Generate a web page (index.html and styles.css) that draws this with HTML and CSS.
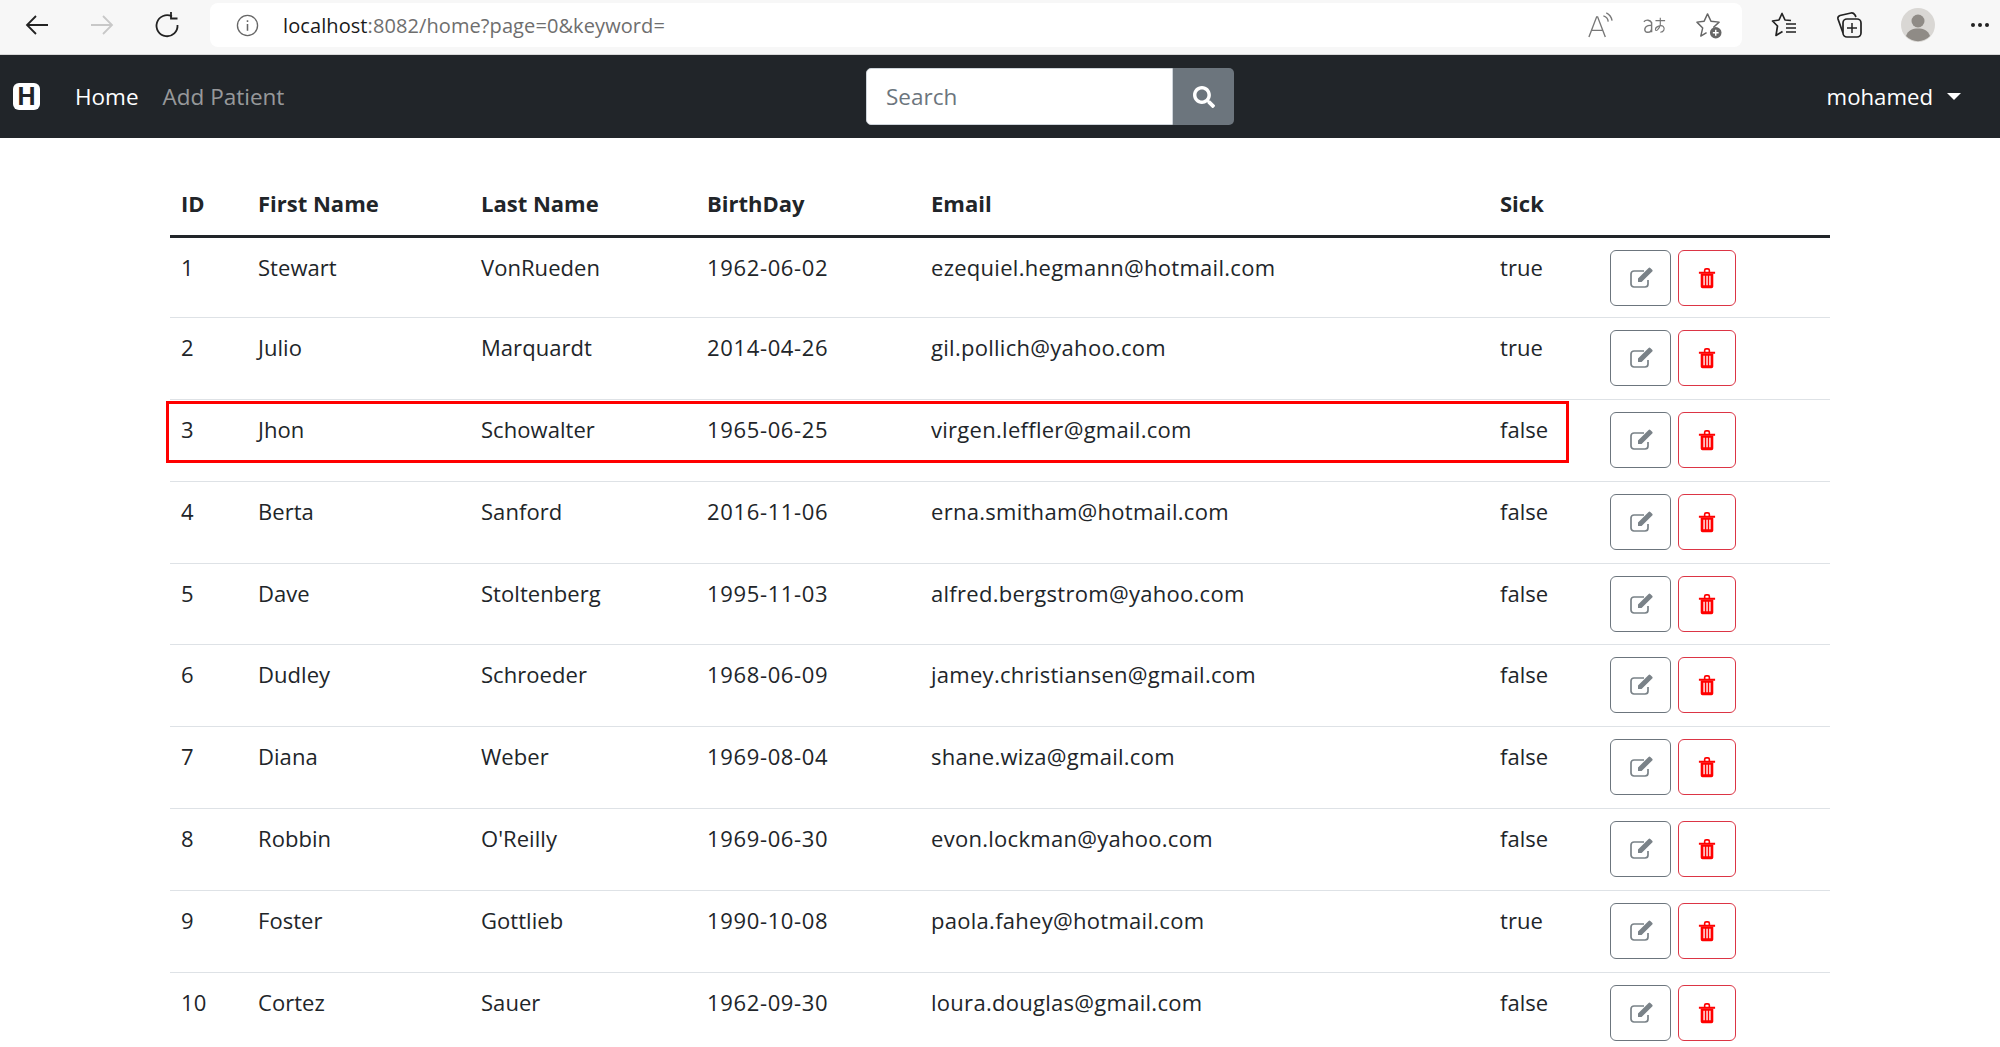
FILE: index.html
```html
<!DOCTYPE html>
<html lang="en">
<head>
<meta charset="utf-8">
<title>Patients</title>
<link rel="stylesheet" href="styles.css">
</head>
<body>
<svg class="defs" width="0" height="0" aria-hidden="true">
  <symbol id="i-edit" viewBox="0 0 24 24">
    <path d="M19 14v4a3 3 0 0 1-3 3H5a3 3 0 0 1-3-3V8a3 3 0 0 1 3-3h10" fill="none" stroke="currentColor" stroke-width="1.700"/>
    <path d="M9 12.500 18.600 2.900l3.600 3.600L12.600 16H9zM19.600 1.900a1.200 1.200 0 0 1 1.700 0l1.900 1.900a1.200 1.200 0 0 1 0 1.700l-1 1-3.600-3.600z" fill="currentColor"/>
  </symbol>
  <symbol id="i-trash" viewBox="0 0 20 24">
    <path d="M1 5h18v2.200H1zM6.500 5V3.500A2.500 2.500 0 0 1 9 1h2a2.500 2.500 0 0 1 2.500 2.500V5h-1.800V3.500A.8.8 0 0 0 11 2.800H9a.8.8 0 0 0-.7.7V5z" fill="currentColor"/>
    <path fill-rule="evenodd" d="M3 7h14v14.500a2 2 0 0 1-2 2H5a2 2 0 0 1-2-2zM6 9.500v10.500h1.500V9.500zM9.300 9.500v10.500h1.500V9.500zM12.500 9.500v10.500H14V9.500z" fill="currentColor"/>
  </symbol>
</svg>

<header class="browser">
  <div class="tools">
    <svg class="tool" viewBox="0 0 28 28"><path d="M25 14H4M13 5l-9 9 9 9" fill="none" stroke="#222" stroke-width="1.800"/></svg>
    <svg class="tool" viewBox="0 0 28 28"><path d="M3 14h21M15 5l9 9-9 9" fill="none" stroke="#c8c8c8" stroke-width="1.800"/></svg>
    <svg class="tool" viewBox="0 0 28 28"><path d="M19 5.500a10.500 10.500 0 1 0 5.500 8.500" fill="none" stroke="#222" stroke-width="1.800"/><path d="M18 1v6.500h6.500" fill="none" stroke="#222" stroke-width="1.800"/></svg>
  </div>
  <div class="address">
    <svg class="info" viewBox="0 0 24 24"><circle cx="12" cy="12" r="10.500" fill="none" stroke="#666" stroke-width="1.400"/><path d="M12 10.500v7M12 6.500v1.800" stroke="#666" stroke-width="1.600"/></svg>
    <span class="url"><span class="url-host">localhost</span>:8082/home?page=0&amp;keyword=</span>
    <span class="address-icons">
      <svg class="addr-icon" viewBox="0 0 28 28"><path d="M2 26 10 5h1l8 21M5 19h11" fill="none" stroke="#777" stroke-width="1.400"/><path d="M17 4a7 7 0 0 1 5 6M20 1a11 11 0 0 1 6 8" fill="none" stroke="#777" stroke-width="1.400"/></svg>
      <svg class="addr-icon" viewBox="0 0 28 28"><path d="M3 10a5 5 0 0 1 8 1v10M11 14c-8-1-9 7-4 7 3 0 4-2 4-4" fill="none" stroke="#777" stroke-width="1.500"/><path d="M15 9h10M20 6v7c-1 5-5 8-5 5s6-5 8-3 1 6-3 6" fill="none" stroke="#777" stroke-width="1.200"/></svg>
      <svg class="addr-icon" viewBox="0 0 28 28"><path d="M19 16 25 10.500 16.500 9.500 13 2 9.500 9.500 2 10.500 8 16.500 6 25 12 21.500" fill="none" stroke="#666" stroke-width="1.500" stroke-linejoin="round"/><circle cx="21.500" cy="21.500" r="6" fill="#666"/><path d="M21.500 18.500v6M18.500 21.500h6" stroke="#fff" stroke-width="1.500"/></svg>
    </span>
  </div>
  <div class="tools-right">
    <svg class="tool" viewBox="0 0 28 28"><path d="M20 9.500 14 9 11 2.500 8 9 1.500 10 6.500 15 5 24.500 11.500 20.500" fill="none" stroke="#222" stroke-width="1.700" stroke-linejoin="round"/><path d="M15 13h10M15 17h10M15 21h10" stroke="#222" stroke-width="1.500"/></svg>
    <svg class="tool" viewBox="0 0 28 28"><path d="M8 22 3 8c-.5-2 .5-3 2-3.500L16 2c2-.5 3 .5 4 2l1 2" fill="none" stroke="#222" stroke-width="1.700"/><rect x="8" y="8" width="18" height="18" rx="4" fill="#f7f7f7" stroke="#222" stroke-width="1.700"/><path d="M17 12v10M12 17h10" stroke="#222" stroke-width="1.500"/></svg>
    <svg class="avatar" viewBox="0 0 34 34"><circle cx="17" cy="17" r="17" fill="#d9d7d4"/><circle cx="17" cy="13" r="6.500" fill="#8f8b86"/><path d="M5 28c2-6 7-7.500 12-7.500S27 22 29 28a16.500 16.500 0 0 1-24 0z" fill="#8f8b86"/></svg>
    <span class="more"><i></i><i></i><i></i></span>
  </div>
</header>

<nav class="navbar">
  <div class="nav-left">
    <span class="brand">H</span>
    <a class="nav-link active" href="#">Home</a>
    <a class="nav-link" href="#">Add Patient</a>
  </div>
  <form class="search">
    <input class="search-input" type="text" placeholder="Search">
    <button class="search-btn" type="button" aria-label="Search">
      <svg viewBox="0 0 512 512" width="22" height="22"><path fill="currentColor" d="M505 442.700 405.300 343c-4.500-4.500-10.600-7-17-7H372c27.600-35.300 44-79.700 44-128C416 93.100 322.900 0 208 0S0 93.100 0 208s93.100 208 208 208c48.300 0 92.700-16.400 128-44v16.300c0 6.400 2.500 12.500 7 17l99.700 99.700c9.400 9.400 24.600 9.400 33.900 0l28.300-28.300c9.400-9.400 9.400-24.600.1-34zM208 336c-70.700 0-128-57.200-128-128 0-70.700 57.200-128 128-128 70.700 0 128 57.200 128 128 0 70.700-57.200 128-128 128z"/></svg>
    </button>
  </form>
  <div class="user">mohamed<span class="caret"></span></div>
</nav>

<main class="content">
  <div class="highlight"></div>
  <table class="patients">
    <colgroup>
      <col class="c-id"><col class="c-first"><col class="c-last"><col class="c-birth"><col class="c-email"><col class="c-sick"><col class="c-actions">
    </colgroup>
    <thead>
      <tr><th>ID</th><th>First Name</th><th>Last Name</th><th>BirthDay</th><th>Email</th><th>Sick</th><th></th></tr>
    </thead>
    <tbody>
      <tr><td>1</td><td>Stewart</td><td>VonRueden</td><td class="date">1962-06-02</td><td class="email">ezequiel.hegmann@hotmail.com</td><td>true</td><td class="actions"><div class="btns"><button class="btn btn-edit" type="button"><svg><use href="#i-edit"/></svg></button><button class="btn btn-del" type="button"><svg><use href="#i-trash"/></svg></button></div></td></tr>
      <tr><td>2</td><td>Julio</td><td>Marquardt</td><td class="date">2014-04-26</td><td class="email">gil.pollich@yahoo.com</td><td>true</td><td class="actions"><div class="btns"><button class="btn btn-edit" type="button"><svg><use href="#i-edit"/></svg></button><button class="btn btn-del" type="button"><svg><use href="#i-trash"/></svg></button></div></td></tr>
      <tr><td>3</td><td>Jhon</td><td>Schowalter</td><td class="date">1965-06-25</td><td class="email">virgen.leffler@gmail.com</td><td>false</td><td class="actions"><div class="btns"><button class="btn btn-edit" type="button"><svg><use href="#i-edit"/></svg></button><button class="btn btn-del" type="button"><svg><use href="#i-trash"/></svg></button></div></td></tr>
      <tr><td>4</td><td>Berta</td><td>Sanford</td><td class="date">2016-11-06</td><td class="email">erna.smitham@hotmail.com</td><td>false</td><td class="actions"><div class="btns"><button class="btn btn-edit" type="button"><svg><use href="#i-edit"/></svg></button><button class="btn btn-del" type="button"><svg><use href="#i-trash"/></svg></button></div></td></tr>
      <tr><td>5</td><td>Dave</td><td>Stoltenberg</td><td class="date">1995-11-03</td><td class="email">alfred.bergstrom@yahoo.com</td><td>false</td><td class="actions"><div class="btns"><button class="btn btn-edit" type="button"><svg><use href="#i-edit"/></svg></button><button class="btn btn-del" type="button"><svg><use href="#i-trash"/></svg></button></div></td></tr>
      <tr><td>6</td><td>Dudley</td><td>Schroeder</td><td class="date">1968-06-09</td><td class="email">jamey.christiansen@gmail.com</td><td>false</td><td class="actions"><div class="btns"><button class="btn btn-edit" type="button"><svg><use href="#i-edit"/></svg></button><button class="btn btn-del" type="button"><svg><use href="#i-trash"/></svg></button></div></td></tr>
      <tr><td>7</td><td>Diana</td><td>Weber</td><td class="date">1969-08-04</td><td class="email">shane.wiza@gmail.com</td><td>false</td><td class="actions"><div class="btns"><button class="btn btn-edit" type="button"><svg><use href="#i-edit"/></svg></button><button class="btn btn-del" type="button"><svg><use href="#i-trash"/></svg></button></div></td></tr>
      <tr><td>8</td><td>Robbin</td><td>O'Reilly</td><td class="date">1969-06-30</td><td class="email">evon.lockman@yahoo.com</td><td>false</td><td class="actions"><div class="btns"><button class="btn btn-edit" type="button"><svg><use href="#i-edit"/></svg></button><button class="btn btn-del" type="button"><svg><use href="#i-trash"/></svg></button></div></td></tr>
      <tr><td>9</td><td>Foster</td><td>Gottlieb</td><td class="date">1990-10-08</td><td class="email">paola.fahey@hotmail.com</td><td>true</td><td class="actions"><div class="btns"><button class="btn btn-edit" type="button"><svg><use href="#i-edit"/></svg></button><button class="btn btn-del" type="button"><svg><use href="#i-trash"/></svg></button></div></td></tr>
      <tr><td>10</td><td>Cortez</td><td>Sauer</td><td class="date">1962-09-30</td><td class="email">loura.douglas@gmail.com</td><td>false</td><td class="actions"><div class="btns"><button class="btn btn-edit" type="button"><svg><use href="#i-edit"/></svg></button><button class="btn btn-del" type="button"><svg><use href="#i-trash"/></svg></button></div></td></tr>
    </tbody>
  </table>
</main>
</body>
</html>
```
FILE: styles.css
```css
* { box-sizing: border-box; }
html, body { margin: 0; height: 1047px; overflow: hidden; background: #fff; }
body { font-family: "Open Sans", "Noto Sans", "Liberation Sans", sans-serif; color: #212529; font-size: 20px; }
.defs { position: absolute; }

.browser { height: 55px; background: #f7f7f7; border-bottom: 1px solid #d8d8d8; display: flex; align-items: flex-start; }
.tools { width: 210px; height: 50px; display: flex; align-items: center; gap: 37px; padding-left: 23px; }
.tool { width: 28px; height: 28px; flex: none; }
.address { width: 1532px; height: 44px; margin-top: 3px; background: #fff; border-radius: 8px; display: flex; align-items: center; padding-left: 26px; }
.info { width: 23px; height: 23px; flex: none; }
.url { margin-left: 24px; font-size: 20px; letter-spacing: .09px; color: #6e6e6e; white-space: nowrap; }
.url-host { color: #1a1a1a; }
.address-icons { margin-left: auto; display: flex; gap: 27px; padding-right: 20px; }
.addr-icon { width: 27px; height: 27px; }
.tools-right { flex: 1; height: 50px; display: flex; align-items: center; padding-left: 29px; }
.tools-right .tool:nth-child(2) { margin-left: 36px; }
.avatar { width: 34px; height: 34px; margin-left: 38px; flex: none; }
.more { margin-left: 36px; display: flex; gap: 3px; }
.more i { width: 4px; height: 4px; border-radius: 50%; background: #222; }

.navbar { height: 83px; background: #212529; display: flex; align-items: center; position: relative; padding: 0 39px 0 13px; }
.nav-left { display: flex; align-items: center; }
.brand { width: 27px; height: 27px; border-radius: 6px; background: #fff; color: #212529; font-weight: 700; font-size: 25px; line-height: 27px; text-align: center; font-family: "Liberation Sans", sans-serif; }
.nav-link { color: rgba(255,255,255,.55); text-decoration: none; margin-left: 24px; font-size: 22.500px; }
.nav-link.active { color: #fff; margin-left: 35px; }
.search { position: absolute; left: 866px; top: 13px; display: flex; height: 57px; }
.search-input { width: 307px; height: 57px; border: 1px solid #ced4da; border-radius: 5px 0 0 5px; padding: 0 19px; font: inherit; font-size: 22.500px; outline: none; }
.search-input::placeholder { color: #6c757d; }
.search-btn { width: 61px; height: 57px; border: 0; border-radius: 0 5px 5px 0; background: #6c757d; color: #fff; display: flex; align-items: center; justify-content: center; padding: 0; }
.user { margin-left: auto; color: #fff; font-size: 22.200px; display: flex; align-items: center; }
.caret { margin-left: 14px; border-top: 7px solid #fff; border-left: 7px solid transparent; border-right: 7px solid transparent; }

.content { position: relative; padding: 0 170px; }
.highlight { position: absolute; left: 166px; top: 263px; width: 1403px; height: 62px; border: 3px solid #f00; pointer-events: none; }
.patients { width: 1660px; border-collapse: collapse; table-layout: fixed; }
.c-id { width: 77px; } .c-first { width: 223px; } .c-last { width: 226px; } .c-birth { width: 224px; } .c-email { width: 569px; } .c-sick { width: 121px; } .c-actions { width: 220px; }
.patients th { height: 98px; padding: 0 11px 17px; text-align: left; font-weight: 700; font-size: 22px; border-bottom: 3px solid #212529; vertical-align: bottom; }
.patients td { height: 81.800px; padding: 13px 11px 0; font-size: 22px; letter-spacing: .05px; line-height: 32px; vertical-align: top; border-bottom: 1px solid #dee2e6; }
.patients td.date { letter-spacing: .65px; }
.patients td.email { letter-spacing: .28px; }
.patients td.actions { padding: 12px 0 0; }
.btns { display: flex; gap: 7px; }
.btn { height: 56px; background: #fff; border-radius: 6px; border: 1px solid; display: flex; align-items: center; justify-content: center; padding: 0; }
.btn svg { display: block; }
.btn-edit { width: 61px; border-color: #6c757d; color: #7a8288; }
.btn-edit svg { width: 24px; height: 24px; }
.btn-del { width: 58px; border-color: #dc3545; color: #f00; }
.btn-del svg { width: 18px; height: 22px; }
```
